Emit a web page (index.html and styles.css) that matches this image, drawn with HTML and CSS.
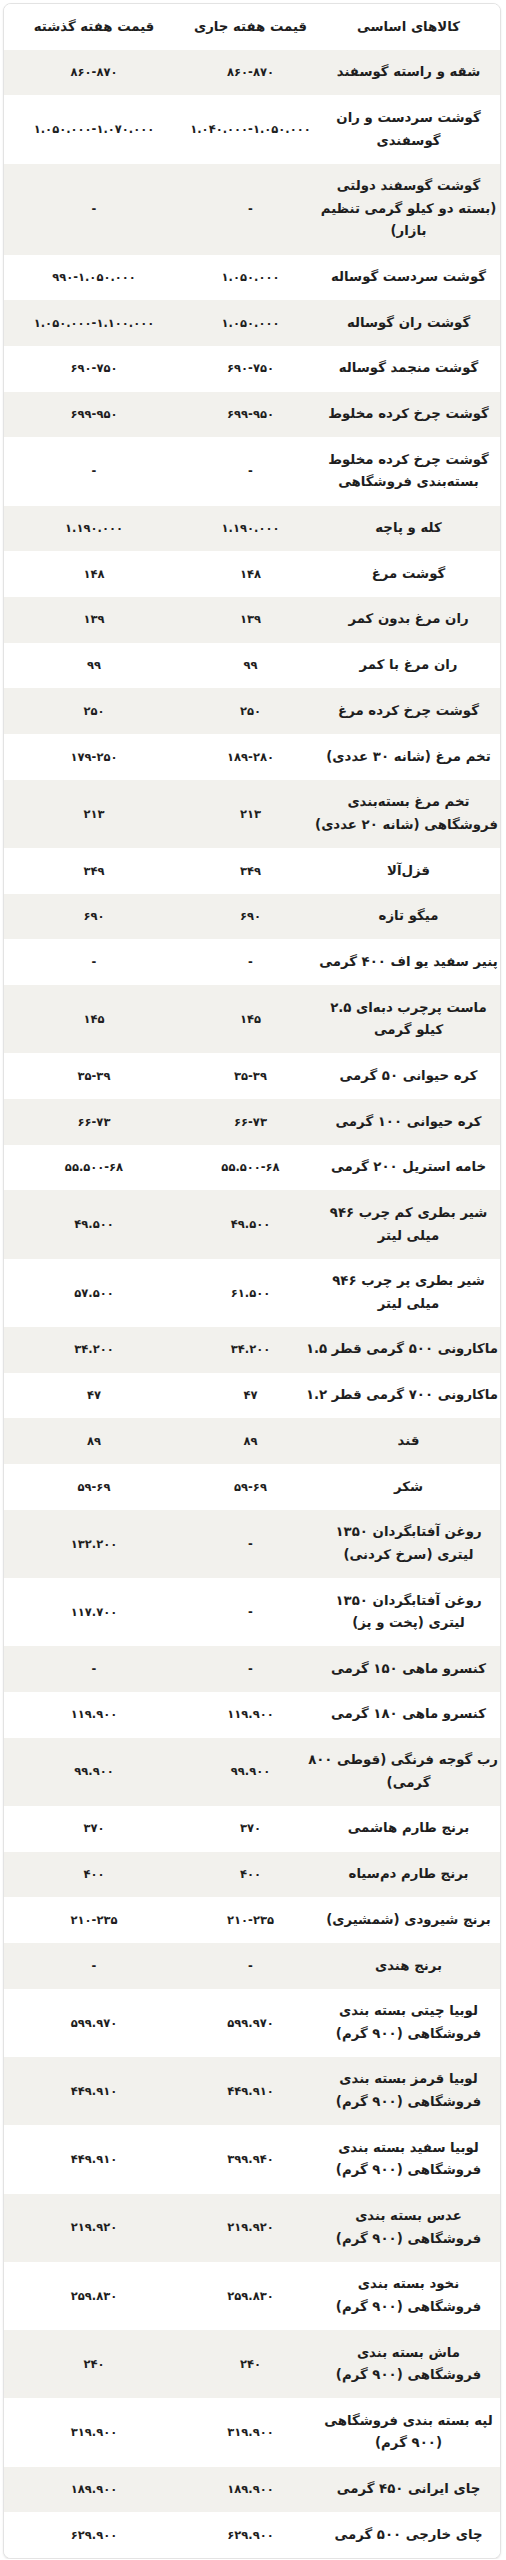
FILE: index.html
```html
<!DOCTYPE html>
<html lang="fa" dir="rtl">
<head>
<meta charset="utf-8">
<title>قیمت کالاهای اساسی</title>
<link rel="stylesheet" href="styles.css">
</head>
<body>
<div class="card">
<table class="price-table">
<colgroup><col class="c-item"><col class="c-now"><col class="c-prev"></colgroup>
<thead>
<tr><th>کالاهای اساسی</th><th>قیمت هفته جاری</th><th>قیمت هفته گذشته</th></tr>
</thead>
<tbody>
<tr><td class="item">شقه و راسته گوسفند</td><td class="num">۸۶۰-۸۷۰</td><td class="num">۸۶۰-۸۷۰</td></tr>
<tr><td class="item">گوشت سردست و ران<br>گوسفندی</td><td class="num">۱.۰۴۰.۰۰۰-۱.۰۵۰.۰۰۰</td><td class="num">۱.۰۵۰.۰۰۰-۱.۰۷۰.۰۰۰</td></tr>
<tr><td class="item">گوشت گوسفند دولتی<br>(بسته دو کیلو گرمی تنظیم<br>بازار)</td><td class="num">-</td><td class="num">-</td></tr>
<tr><td class="item">گوشت سردست گوساله</td><td class="num">۱.۰۵۰.۰۰۰</td><td class="num">۹۹۰-۱.۰۵۰.۰۰۰</td></tr>
<tr><td class="item">گوشت ران گوساله</td><td class="num">۱.۰۵۰.۰۰۰</td><td class="num">۱.۰۵۰.۰۰۰-۱.۱۰۰.۰۰۰</td></tr>
<tr><td class="item">گوشت منجمد گوساله</td><td class="num">۶۹۰-۷۵۰</td><td class="num">۶۹۰-۷۵۰</td></tr>
<tr><td class="item">گوشت چرخ کرده مخلوط</td><td class="num">۶۹۹-۹۵۰</td><td class="num">۶۹۹-۹۵۰</td></tr>
<tr><td class="item">گوشت چرخ کرده مخلوط<br>بسته‌بندی فروشگاهی</td><td class="num">-</td><td class="num">-</td></tr>
<tr><td class="item">کله و پاچه</td><td class="num">۱.۱۹۰.۰۰۰</td><td class="num">۱.۱۹۰.۰۰۰</td></tr>
<tr><td class="item">گوشت مرغ</td><td class="num">۱۴۸</td><td class="num">۱۴۸</td></tr>
<tr><td class="item">ران مرغ بدون کمر</td><td class="num">۱۳۹</td><td class="num">۱۳۹</td></tr>
<tr><td class="item">ران مرغ با کمر</td><td class="num">۹۹</td><td class="num">۹۹</td></tr>
<tr><td class="item">گوشت چرخ کرده مرغ</td><td class="num">۲۵۰</td><td class="num">۲۵۰</td></tr>
<tr><td class="item">تخم مرغ (شانه ۳۰ عددی)</td><td class="num">۱۸۹-۲۸۰</td><td class="num">۱۷۹-۲۵۰</td></tr>
<tr><td class="item">تخم مرغ بسته‌بندی<br>فروشگاهی (شانه ۲۰ عددی)</td><td class="num">۲۱۳</td><td class="num">۲۱۳</td></tr>
<tr><td class="item">قزل‌آلا</td><td class="num">۳۴۹</td><td class="num">۳۴۹</td></tr>
<tr><td class="item">میگو تازه</td><td class="num">۶۹۰</td><td class="num">۶۹۰</td></tr>
<tr><td class="item">پنیر سفید یو اف ۴۰۰ گرمی</td><td class="num">-</td><td class="num">-</td></tr>
<tr><td class="item">ماست پرچرب دبه‌ای ۲.۵<br>کیلو گرمی</td><td class="num">۱۴۵</td><td class="num">۱۴۵</td></tr>
<tr><td class="item">کره حیوانی ۵۰ گرمی</td><td class="num">۳۵-۳۹</td><td class="num">۳۵-۳۹</td></tr>
<tr><td class="item">کره حیوانی ۱۰۰ گرمی</td><td class="num">۶۶-۷۳</td><td class="num">۶۶-۷۳</td></tr>
<tr><td class="item">خامه استریل ۲۰۰ گرمی</td><td class="num">۵۵.۵۰۰-۶۸</td><td class="num">۵۵.۵۰۰-۶۸</td></tr>
<tr><td class="item">شیر بطری کم چرب ۹۴۶<br>میلی لیتر</td><td class="num">۴۹.۵۰۰</td><td class="num">۴۹.۵۰۰</td></tr>
<tr><td class="item">شیر بطری پر چرب ۹۴۶<br>میلی لیتر</td><td class="num">۶۱.۵۰۰</td><td class="num">۵۷.۵۰۰</td></tr>
<tr><td class="item">ماکارونی ۵۰۰ گرمی قطر ۱.۵</td><td class="num">۳۴.۲۰۰</td><td class="num">۳۴.۲۰۰</td></tr>
<tr><td class="item">ماکارونی ۷۰۰ گرمی قطر ۱.۲</td><td class="num">۴۷</td><td class="num">۴۷</td></tr>
<tr><td class="item">قند</td><td class="num">۸۹</td><td class="num">۸۹</td></tr>
<tr><td class="item">شکر</td><td class="num">۵۹-۶۹</td><td class="num">۵۹-۶۹</td></tr>
<tr><td class="item">روغن آفتابگردان ۱۳۵۰<br>لیتری (سرخ کردنی)</td><td class="num">-</td><td class="num">۱۳۲.۲۰۰</td></tr>
<tr><td class="item">روغن آفتابگردان ۱۳۵۰<br>لیتری (پخت و پز)</td><td class="num">-</td><td class="num">۱۱۷.۷۰۰</td></tr>
<tr><td class="item">کنسرو ماهی ۱۵۰ گرمی</td><td class="num">-</td><td class="num">-</td></tr>
<tr><td class="item">کنسرو ماهی ۱۸۰ گرمی</td><td class="num">۱۱۹.۹۰۰</td><td class="num">۱۱۹.۹۰۰</td></tr>
<tr><td class="item">رب گوجه فرنگی (قوطی ۸۰۰<br>گرمی)</td><td class="num">۹۹.۹۰۰</td><td class="num">۹۹.۹۰۰</td></tr>
<tr><td class="item">برنج طارم هاشمی</td><td class="num">۳۷۰</td><td class="num">۳۷۰</td></tr>
<tr><td class="item">برنج طارم دم‌سیاه</td><td class="num">۴۰۰</td><td class="num">۴۰۰</td></tr>
<tr><td class="item">برنج شیرودی (شمشیری)</td><td class="num">۲۱۰-۲۳۵</td><td class="num">۲۱۰-۲۳۵</td></tr>
<tr><td class="item">برنج هندی</td><td class="num">-</td><td class="num">-</td></tr>
<tr><td class="item">لوبیا چیتی بسته بندی<br>فروشگاهی (۹۰۰ گرم)</td><td class="num">۵۹۹.۹۷۰</td><td class="num">۵۹۹.۹۷۰</td></tr>
<tr><td class="item">لوبیا قرمز بسته بندی<br>فروشگاهی (۹۰۰ گرم)</td><td class="num">۴۴۹.۹۱۰</td><td class="num">۴۴۹.۹۱۰</td></tr>
<tr><td class="item">لوبیا سفید بسته بندی<br>فروشگاهی (۹۰۰ گرم)</td><td class="num">۳۹۹.۹۴۰</td><td class="num">۴۴۹.۹۱۰</td></tr>
<tr><td class="item">عدس بسته بندی<br>فروشگاهی (۹۰۰ گرم)</td><td class="num">۲۱۹.۹۲۰</td><td class="num">۲۱۹.۹۲۰</td></tr>
<tr><td class="item">نخود بسته بندی<br>فروشگاهی (۹۰۰ گرم)</td><td class="num">۲۵۹.۸۳۰</td><td class="num">۲۵۹.۸۳۰</td></tr>
<tr><td class="item">ماش بسته بندی<br>فروشگاهی (۹۰۰ گرم)</td><td class="num">۲۴۰</td><td class="num">۲۴۰</td></tr>
<tr><td class="item">لپه بسته بندی فروشگاهی<br>(۹۰۰ گرم)</td><td class="num">۳۱۹.۹۰۰</td><td class="num">۳۱۹.۹۰۰</td></tr>
<tr><td class="item">چای ایرانی ۴۵۰ گرمی</td><td class="num">۱۸۹.۹۰۰</td><td class="num">۱۸۹.۹۰۰</td></tr>
<tr><td class="item">چای خارجی ۵۰۰ گرمی</td><td class="num">۶۲۹.۹۰۰</td><td class="num">۶۲۹.۹۰۰</td></tr>
</tbody>
</table>
</div>
</body>
</html>
```

FILE: styles.css
```css
html, body {
  margin: 0;
  padding: 0;
  background: #ffffff;
}

body {
  padding: 3px 5px 0 3px;
  font-family: "DejaVu Sans", "Noto Sans", sans-serif;
  color: #1e1e1e;
}

.card {
  border: 1px solid #e3e3e3;
  border-radius: 8px;
  overflow: hidden;
  background: #ffffff;
  box-shadow: 0 1px 2px rgba(0, 0, 0, 0.10);
}

.price-table {
  width: 100%;
  border-collapse: collapse;
  table-layout: fixed;
  direction: rtl;
}

.c-item { width: 183px; }
.c-now { width: 133px; }
.c-prev { width: auto; }

.price-table th,
.price-table td {
  padding: 11.55px 2px;
  line-height: 22.6px;
  text-align: center;
  vertical-align: middle;
  font-weight: bold;
  white-space: nowrap;
}

.price-table th {
  font-size: 13.3px;
  background: #ffffff;
}

.price-table td.item {
  font-size: 13.3px;
}

.price-table td.num {
  font-size: 11.5px;
}

.price-table tbody tr:nth-child(odd) {
  background: #f2f1ed;
}

.price-table tbody tr:nth-child(even) {
  background: #ffffff;
}
```
